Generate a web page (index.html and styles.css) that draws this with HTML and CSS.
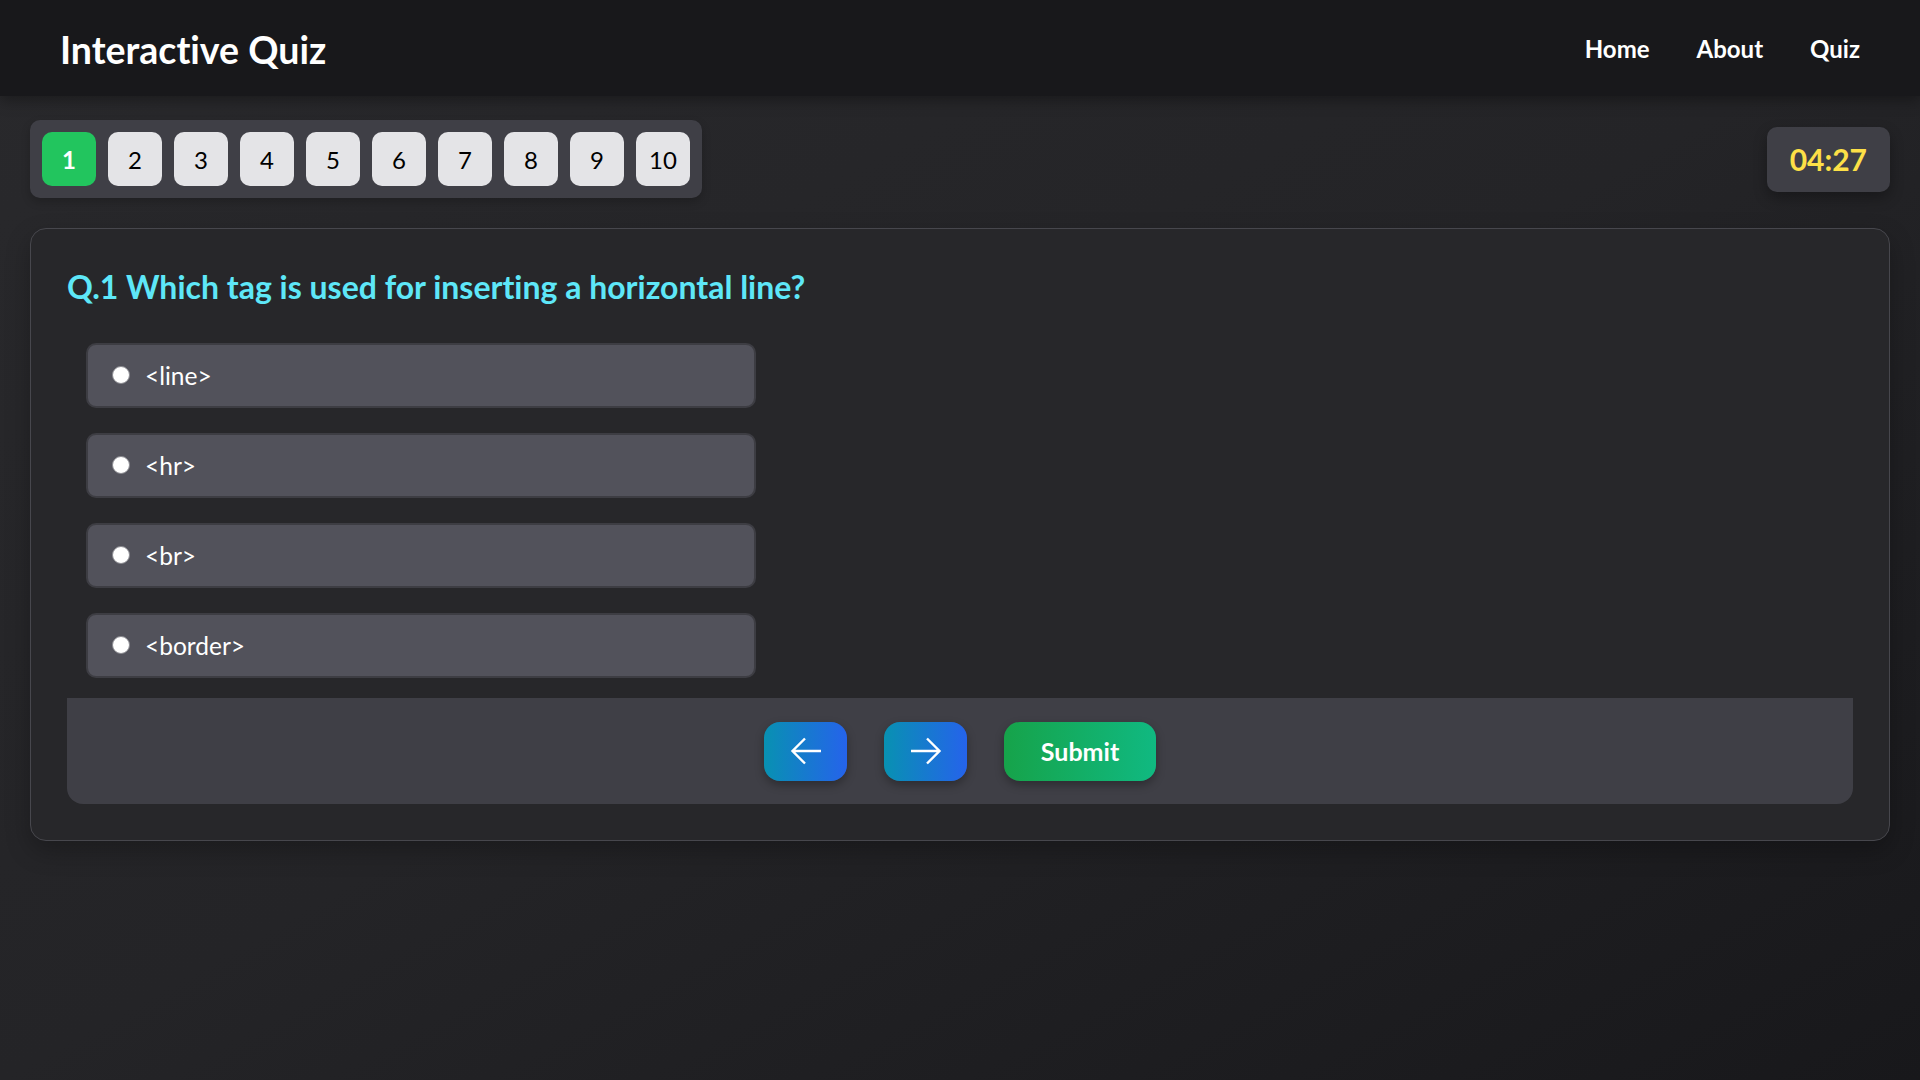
FILE: index.html
```html
<!DOCTYPE html>
<html lang="en">
<head>
<meta charset="utf-8">
<title>Interactive Quiz</title>
<link rel="stylesheet" href="styles.css">
</head>
<body>
<header class="topbar">
  <h1 class="brand">Interactive Quiz</h1>
  <nav class="nav">
    <a class="nav-link" href="#">Home</a>
    <a class="nav-link" href="#">About</a>
    <a class="nav-link" href="#">Quiz</a>
  </nav>
</header>
<main class="main">
  <div class="toolbar">
    <div class="pills">
      <button class="pill pill-active">1</button>
      <button class="pill">2</button>
      <button class="pill">3</button>
      <button class="pill">4</button>
      <button class="pill">5</button>
      <button class="pill">6</button>
      <button class="pill">7</button>
      <button class="pill">8</button>
      <button class="pill">9</button>
      <button class="pill">10</button>
    </div>
    <div class="timer">04:27</div>
  </div>
  <section class="card">
    <h2 class="question">Q.1 Which tag is used for inserting a horizontal line?</h2>
    <div class="options">
      <label class="option"><input class="radio" type="radio" name="q1"><span class="option-text">&lt;line&gt;</span></label>
      <label class="option"><input class="radio" type="radio" name="q1"><span class="option-text">&lt;hr&gt;</span></label>
      <label class="option"><input class="radio" type="radio" name="q1"><span class="option-text">&lt;br&gt;</span></label>
      <label class="option"><input class="radio" type="radio" name="q1"><span class="option-text">&lt;border&gt;</span></label>
    </div>
    <div class="controls">
      <button class="ctrl ctrl-nav" aria-label="Previous">
        <svg class="arrow" viewBox="0 0 32 28" width="32" height="28"><path d="M15 1.5 L2.5 14 L15 26.5 M2.5 14 H31" fill="none" stroke="#fff" stroke-width="2.4" stroke-linejoin="miter"/></svg>
      </button>
      <button class="ctrl ctrl-nav" aria-label="Next">
        <svg class="arrow" viewBox="0 0 32 28" width="32" height="28"><path d="M17 1.5 L29.5 14 L17 26.5 M29.5 14 H1" fill="none" stroke="#fff" stroke-width="2.4" stroke-linejoin="miter"/></svg>
      </button>
      <button class="ctrl ctrl-submit">Submit</button>
    </div>
  </section>
</main>
</body>
</html>
```
FILE: styles.css
```css
* { box-sizing: border-box; }

html, body { height: 100%; }

body {
  margin: 0;
  min-height: 100vh;
  font-family: Lato, "Open Sans", sans-serif;
  font-variant-ligatures: none;
  color: #fff;
  background: linear-gradient(to bottom right, #29292c 0%, #242427 50%, #18181b 100%);
}

.topbar {
  height: 96px;
  padding: 0 60px;
  display: flex;
  align-items: center;
  justify-content: space-between;
  background: #18181b;
  box-shadow: 0 4px 14px rgba(0, 0, 0, 0.35);
  position: relative;
}

.brand {
  margin: 3px 0 0;
  font-size: 37.5px;
  font-weight: 700;
  line-height: 1;
  color: #fff;
}

.nav {
  display: flex;
  gap: 47px;
}

.nav-link {
  color: #fff;
  text-decoration: none;
  font-size: 24px;
  font-weight: 700;
}

.main {
  padding: 24px 30px;
}

.toolbar {
  display: flex;
  align-items: center;
  justify-content: space-between;
}

.pills {
  display: flex;
  gap: 12px;
  padding: 12px;
  background: #3f3f46;
  border-radius: 10px;
  box-shadow: 0 4px 10px rgba(0, 0, 0, 0.2);
}

.pill {
  width: 54px;
  height: 54px;
  border: none;
  border-radius: 10px;
  background: #e4e4e7;
  color: #000;
  font-family: Lato, "Open Sans", sans-serif;
  font-size: 24px;
  font-weight: 400;
  padding: 0;
}

.pill-active {
  background: #22c55e;
  color: #fff;
  font-weight: 700;
}

.timer {
  padding: 14px 23px;
  background: #3f3f46;
  border-radius: 10px;
  color: #fde047;
  font-size: 30px;
  font-weight: 700;
  line-height: 37px;
  box-shadow: 0 6px 14px rgba(0, 0, 0, 0.3);
}

.card {
  margin-top: 30px;
  padding: 36px;
  background: #27272a;
  border: 1px solid #47474d;
  border-radius: 16px;
  box-shadow: 0 10px 25px rgba(0, 0, 0, 0.25);
}

.question {
  margin: 2px 0 36px;
  font-size: 32px;
  font-weight: 700;
  line-height: 40px;
  color: #5ee7f8;
}

.options {
  display: flex;
  flex-direction: column;
  gap: 25px;
  margin-left: 19px;
}

.option {
  width: 670px;
  height: 65px;
  display: flex;
  align-items: center;
  padding: 0 24px;
  background: #52525b;
  border: 2px solid #3d3d43;
  border-radius: 10px;
  cursor: pointer;
}

.radio {
  appearance: none;
  -webkit-appearance: none;
  width: 18px;
  height: 18px;
  margin: 0 15px 2px 0;
  border-radius: 50%;
  background: #fff;
  border: 1px solid #8a8a90;
  flex-shrink: 0;
}

.option-text {
  font-size: 24.5px;
  color: #fff;
}

.controls {
  margin-top: 20px;
  height: 106px;
  display: flex;
  align-items: center;
  justify-content: center;
  gap: 37px;
  background: #3f3f46;
  border-radius: 0 0 16px 16px;
}

.ctrl {
  height: 59px;
  border: none;
  border-radius: 16px;
  color: #fff;
  display: flex;
  align-items: center;
  justify-content: center;
  box-shadow: 0 4px 10px rgba(0, 0, 0, 0.3);
  padding: 0;
}

.ctrl-nav {
  width: 83px;
  background: linear-gradient(to right, #0891b2, #2563eb);
}

.ctrl-submit {
  width: 152px;
  background: linear-gradient(to right, #16a34a, #10b981);
  font-family: Lato, "Open Sans", sans-serif;
  font-size: 25px;
  font-weight: 700;
}

.arrow {
  display: block;
}
```
